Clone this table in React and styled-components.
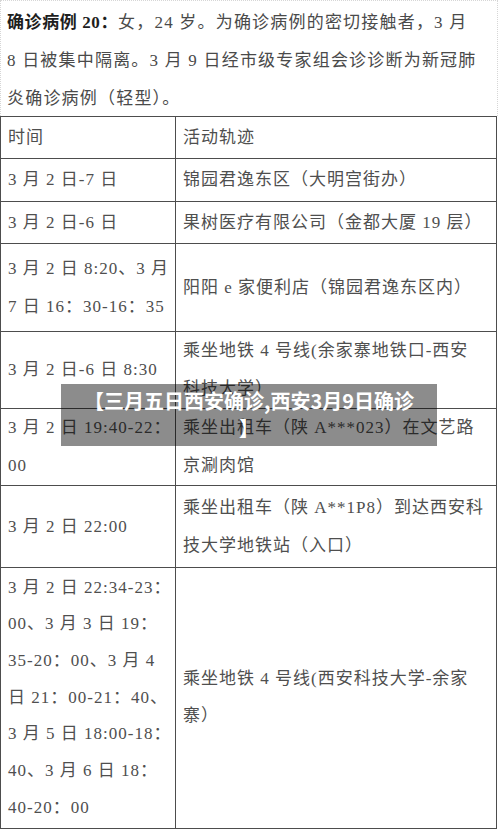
import React from "react";
import styled, { createGlobalStyle } from "styled-components";

const rows = [
  { h: 43, time: ["3 月 2 日-7 日"], place: ["锦园君逸东区（大明宫街办）"] },
  { h: 42, time: ["3 月 2 日-6 日"], place: ["果树医疗有限公司（金都大厦 19 层）"] },
  {
    h: 88,
    time: ["3 月 2 日 8:20、3 月", "7 日 16：30-16：35"],
    place: ["阳阳 e 家便利店（锦园君逸东区内）"],
  },
  {
    h: 77,
    time: ["3 月 2 日-6 日 8:30"],
    place: ["乘坐地铁 4 号线(余家寨地铁口-西安", "科技大学）"],
  },
  {
    h: 77,
    time: ["3 月 2 日 19:40-22：", "00"],
    place: ["乘坐出租车（陕 A***023）在文艺路", "京涮肉馆"],
  },
  {
    h: 82,
    time: ["3 月 2 日 22:00"],
    place: ["乘坐出租车（陕 A**1P8）到达西安科", "技大学地铁站（入口）"],
  },
  {
    h: 261,
    tight: true,
    time: [
      "3 月 2 日 22:34-23：",
      "00、3 月 3 日 19：",
      "35-20：00、3 月 4",
      "日 21：00-21：40、",
      "3 月 5 日 18:00-18：",
      "40、3 月 6 日 18：",
      "40-20：00",
    ],
    place: ["乘坐地铁 4 号线(西安科技大学-余家", "寨）"],
  },
];

function Lines({ items }) {
  return items.map((t, i) => (
    <React.Fragment key={i}>
      {i > 0 && <br />}
      {t}
    </React.Fragment>
  ));
}

export default function App() {
  return (
    <Page>
      <GlobalStyle />
      <Intro>
        <Strong>确诊病例 20：</Strong>女，24 岁。为确诊病例的密切接触者，3 月
        <br />
        8 日被集中隔离。3 月 9 日经市级专家组会诊诊断为新冠肺
        <br />
        炎确诊病例（轻型）。
      </Intro>
      <Table>
        <colgroup>
          <col style={{ width: 175 }} />
          <col />
        </colgroup>
        <tbody>
          <Row h={42}>
            <Cell>时间</Cell>
            <Cell>活动轨迹</Cell>
          </Row>
          {rows.map((r, i) => (
            <Row key={i} h={r.h}>
              <Cell tight={r.tight}>
                <Lines items={r.time} />
              </Cell>
              <Cell tight={r.tight}>
                <Lines items={r.place} />
              </Cell>
            </Row>
          ))}
        </tbody>
      </Table>
      <Caption>
        【三月五日西安确诊,西安3月9日确诊
        <br />】
      </Caption>
    </Page>
  );
}

const GlobalStyle = createGlobalStyle`
  html, body {
    margin: 0;
    padding: 0;
    background: #fff;
  }
  body {
    font-family: "Liberation Serif", "Noto Sans CJK SC", serif;
  }
`;

const Page = styled.div`
  position: relative;
  width: 500px;
  height: 830px;
  overflow: hidden;
  background: #fff;
`;

const Intro = styled.div`
  box-sizing: border-box;
  width: 498px;
  height: 116px;
  padding: 3px 6px 0;
  border: 1px dotted #d6d6d6;
  border-bottom: none;
  font-size: 17px;
  line-height: 38px;
  letter-spacing: 1.2px;
  color: #4a4a4a;
  white-space: nowrap;
`;

const Strong = styled.span`
  font-weight: bold;
  color: #1e1e1e;
  letter-spacing: 0.6px;
`;

const Table = styled.table`
  width: 497px;
  border-collapse: collapse;
  table-layout: fixed;
`;

const Row = styled.tr`
  height: ${(p) => p.h}px;
`;

const Cell = styled.td`
  border: 1px solid #4d4d4d;
  padding: 0 4px 0 7px;
  vertical-align: middle;
  font-size: 17px;
  line-height: ${(p) => (p.tight ? 36.7 : 38)}px;
  letter-spacing: 1px;
  color: #4f4f4f;
  white-space: nowrap;
  overflow: hidden;
`;

const Caption = styled.div`
  position: absolute;
  top: 384px;
  left: 61px;
  box-sizing: border-box;
  width: 376px;
  height: 62px;
  padding-top: 3px;
  background: rgba(0, 0, 0, 0.45);
  color: #fff;
  font-family: "Noto Sans CJK SC", sans-serif;
  font-weight: bold;
  font-size: 20px;
  line-height: 27px;
  text-align: center;
  white-space: nowrap;
`;
